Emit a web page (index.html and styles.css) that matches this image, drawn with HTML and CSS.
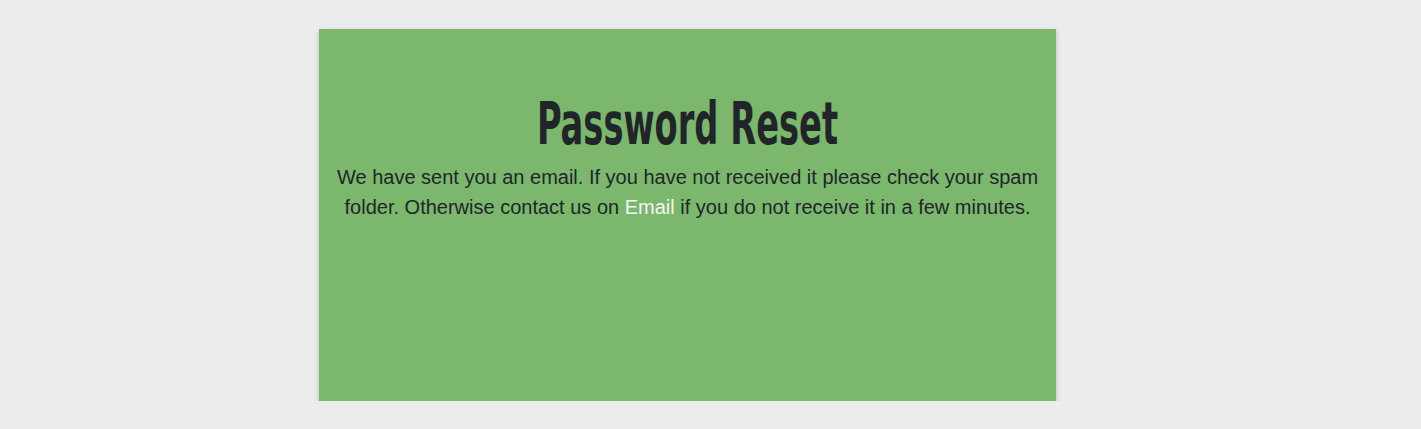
FILE: index.html
```html
<!DOCTYPE html>
<html lang="en">
<head>
<meta charset="utf-8">
<title>Password Reset</title>
<link rel="stylesheet" href="styles.css">
</head>
<body>
<main class="page">
  <section class="card">
    <h1 class="title">Password Reset</h1>
    <p class="message">We have sent you an email. If you have not received it please check your spam folder. Otherwise contact us on <a class="link" href="#">Email</a> if you do not receive it in a few minutes.</p>
  </section>
</main>
</body>
</html>
```

FILE: styles.css
```css
html, body {
  margin: 0;
  padding: 0;
  background: #ececec;
}
.page {
  padding: 29px 0 0 319px;
}
.card {
  box-sizing: border-box;
  width: 737px;
  height: 372px;
  background: #7bb76d;
  box-shadow: 0 2px 5px rgba(0,0,0,0.22);
  padding: 56px 16px 0;
  text-align: center;
  color: #212529;
}
.title {
  margin: 0;
  font-family: "DejaVu Sans Condensed", "Liberation Sans", sans-serif;
  font-weight: 700;
  font-size: 59px;
  line-height: 78px;
  color: #212529;
  transform: scaleX(0.635);
}
.message {
  margin: -1px 0 0;
  font-family: "Liberation Sans", Arial, sans-serif;
  font-size: 20px;
  line-height: 30px;
}
.link {
  color: #f5f5f5;
  text-decoration: none;
}
```
